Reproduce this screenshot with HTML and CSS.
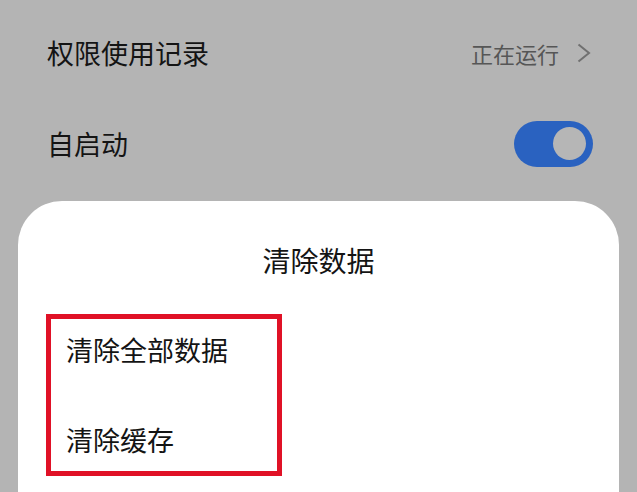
FILE: index.html
```html
<!DOCTYPE html>
<html lang="zh-CN">
<head>
    <meta charset="UTF-8">
    <meta name="viewport" content="width=device-width, initial-scale=1.0">
    <title>清除数据</title>
    <link rel="stylesheet" href="styles.css">
</head>
<body>
    <div class="settings">
        <div class="row">
            <span class="label">权限使用记录</span>
            <span class="value">
                正在运行
                <svg class="chevron" width="14" height="20" viewBox="0 0 14 20">
                    <polyline points="1.5,1.5 12,10 1.5,18.5" fill="none" stroke="#707070" stroke-width="2" stroke-linejoin="miter"/>
                </svg>
            </span>
        </div>
        <div class="row">
            <span class="label">自启动</span>
            <span class="switch"><span class="knob"></span></span>
        </div>
    </div>

    <div class="sheet">
        <h2 class="sheet-title">清除数据</h2>
        <div class="options">
            <div class="option">清除全部数据</div>
            <div class="option">清除缓存</div>
        </div>
    </div>
</body>
</html>
```

FILE: styles.css
```css
body {
    margin: 0;
    height: 100vh;
    display: flex;
    flex-direction: column;
    background: #b4b4b4;
    font-family: "Noto Sans CJK SC", "Noto Sans", sans-serif;
    color: #141414;
    overflow: hidden;
}
.settings {
    padding: 7px 44px 0 47px;
}
.row {
    height: 91px;
    display: flex;
    align-items: center;
    justify-content: space-between;
}
.label {
    font-size: 27px;
    line-height: 40px;
}
.value {
    display: flex;
    align-items: center;
    gap: 18px;
    font-size: 22px;
    color: #565656;
}
.chevron {
    display: block;
    margin-right: 2px;
}
.switch {
    width: 79px;
    height: 46px;
    border-radius: 23px;
    background: #2a62c0;
    display: flex;
    align-items: center;
    justify-content: flex-end;
    padding-right: 7px;
    box-sizing: border-box;
}
.knob {
    width: 33px;
    height: 33px;
    border-radius: 50%;
    background: #b6b6b6;
}
.sheet {
    flex: 1;
    margin: 12px 18px 0 18px;
    background: #fff;
    border-radius: 44px 44px 0 0;
}
.sheet-title {
    margin: 40px 0 0 0;
    text-align: center;
    font-size: 28px;
    line-height: 38px;
    font-weight: 400;
}
.options {
    margin: 35px 0 0 28px;
    width: 236px;
    box-sizing: border-box;
    border: 5px solid #e01126;
    padding: 11px 15px;
    display: flex;
    flex-direction: column;
    gap: 50px;
}
.option {
    font-size: 27px;
    line-height: 40px;
}
```
